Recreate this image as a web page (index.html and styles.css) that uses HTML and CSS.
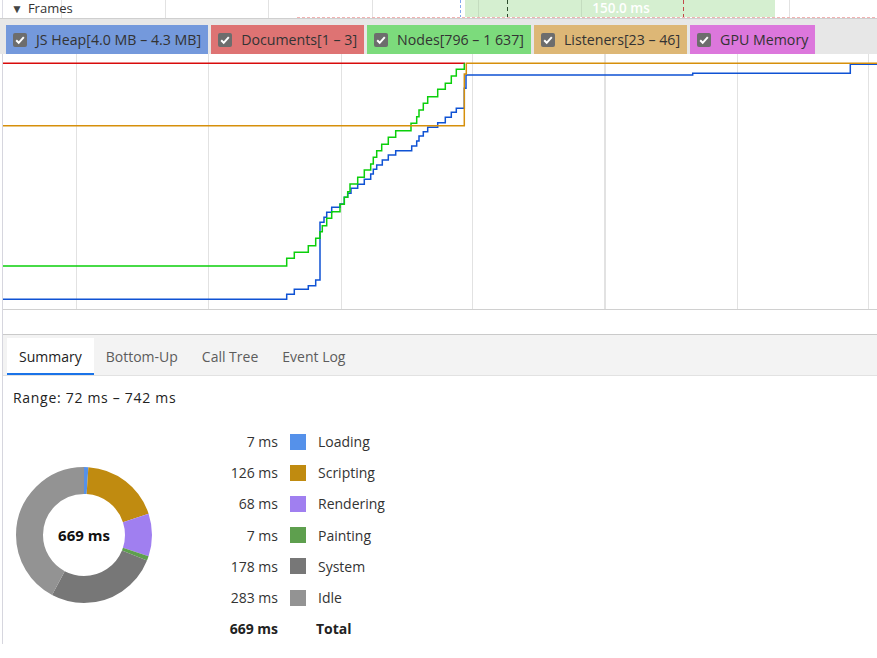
FILE: index.html
```html
<!DOCTYPE html>
<html lang="en">
<head>
<meta charset="utf-8">
<title>Performance – Memory</title>
<link rel="stylesheet" href="styles.css">
</head>
<body>
<div class="frames">
  <svg class="frames-canvas" width="877" height="18" viewBox="0 0 877 18">
    <line x1="2.5" y1="0" x2="2.5" y2="18" stroke="#dcdce4"/>
    <rect x="465" y="0" width="310" height="17" fill="#d5efd0"/>
    <g stroke="#e2e2e2">
      <line x1="61.5" y1="0" x2="61.5" y2="18"/>
      <line x1="165.5" y1="0" x2="165.5" y2="18"/>
      <line x1="268.5" y1="0" x2="268.5" y2="18"/>
      <line x1="372.5" y1="0" x2="372.5" y2="18"/>
      <line x1="789.5" y1="0" x2="789.5" y2="18"/>
    </g>
    <g stroke="#c4dcbf">
      <line x1="478.5" y1="0" x2="478.5" y2="17"/>
      <line x1="581.5" y1="0" x2="581.5" y2="17"/>
    </g>
    <line x1="460.5" y1="0" x2="460.5" y2="17" stroke="#7fa8ee" stroke-dasharray="3 2"/>
    <line x1="507.5" y1="0" x2="507.5" y2="17" stroke="#2c4a2c" stroke-dasharray="4 3"/>
    <line x1="683.5" y1="0" x2="683.5" y2="17" stroke="#c24a4a" stroke-dasharray="4 3"/>
    <text x="621" y="12.5" text-anchor="middle" class="frame-dur">150.0 ms</text>
    <line x1="297" y1="17.5" x2="877" y2="17.5" stroke="#f2b3b3" stroke-dasharray="3 2"/>
  </svg>
  <div class="frames-label"><span class="tri">▼</span><span>Frames</span></div>
</div>

<div class="legend">
  <label class="counter c-heap"><span class="cb"><svg width="14" height="14" viewBox="0 0 14 14"><path d="M3.2 7.3l2.5 2.5 5.1-5.6" fill="none" stroke="#fff" stroke-width="2"/></svg></span>JS Heap[4.0 MB – 4.3 MB]</label>
  <label class="counter c-docs"><span class="cb"><svg width="14" height="14" viewBox="0 0 14 14"><path d="M3.2 7.3l2.5 2.5 5.1-5.6" fill="none" stroke="#fff" stroke-width="2"/></svg></span>Documents[1 – 3]</label>
  <label class="counter c-nodes"><span class="cb"><svg width="14" height="14" viewBox="0 0 14 14"><path d="M3.2 7.3l2.5 2.5 5.1-5.6" fill="none" stroke="#fff" stroke-width="2"/></svg></span>Nodes[796 – 1 637]</label>
  <label class="counter c-listeners"><span class="cb"><svg width="14" height="14" viewBox="0 0 14 14"><path d="M3.2 7.3l2.5 2.5 5.1-5.6" fill="none" stroke="#fff" stroke-width="2"/></svg></span>Listeners[23 – 46]</label>
  <label class="counter c-gpu"><span class="cb"><svg width="14" height="14" viewBox="0 0 14 14"><path d="M3.2 7.3l2.5 2.5 5.1-5.6" fill="none" stroke="#fff" stroke-width="2"/></svg></span>GPU Memory</label>
</div>

<div class="panel">
  <div class="chart">
    <svg width="874" height="255" viewBox="3 54 874 255">
      <g stroke="#e2e2e2" stroke-width="1">
        <line x1="76.5" y1="54" x2="76.5" y2="309"/>
        <line x1="208.5" y1="54" x2="208.5" y2="309"/>
        <line x1="341.5" y1="54" x2="341.5" y2="309"/>
        <line x1="472.5" y1="54" x2="472.5" y2="309"/>
        <line x1="605" y1="54" x2="605" y2="309" stroke-width="2"/>
        <line x1="737.5" y1="54" x2="737.5" y2="309"/>
        <line x1="868.5" y1="54" x2="868.5" y2="309"/>
      </g>
      <g fill="none" stroke-width="1.5">
        <path class="l-heap" d="M3 299.3 H286.7 V294.3 H294.3 V289.3 H308.3 V285.7 H315.7 V280 H320 V222.3 H324 V217.3 H326.7 V212.3 H331.7 V207.3 H340 V204 H344.3 V197.3 H347.7 V193.3 H351 V188.3 H357.7 V184.3 H364.3 V179.3 H370.7 V174 H373.3 V169.3 H376.7 V165 H382.3 V160 H388.3 V155 H395.7 V150.7 H411.7 V146 H416.7 V141 H419 V136 H423.3 V131.7 H427.7 V127.3 H437.7 V122.7 H445.3 V117.3 H451.3 V112.3 H456.3 V108.3 H464.3 V88.3 H466 V75 H692.7 V73.3 H850.3 V64.3 H877"/>
        <path class="l-docs" d="M3 63.3 H465"/>
        <path class="l-nodes" d="M3 266 H286.7 V258.3 H294.3 V252.3 H308.3 V245.7 H315.7 V238.3 H320 V231.7 H322.3 V225.7 H326.7 V218.3 H331.7 V211.7 H340 V204.3 H344.3 V197.3 H347.7 V191.7 H350 V184 H357.7 V177.3 H364.3 V170 H370.7 V164 H373.3 V157.3 H376.7 V150.7 H381.7 V144.3 H388.3 V137.3 H395.7 V130.7 H411 V123.3 H416.7 V116.7 H419 V110 H423.3 V103.3 H427.7 V96.7 H437.7 V89.3 H445.3 V83.3 H451.3 V76 H456.3 V69.3 H464.3 V63.3"/>
        <path class="l-listeners" d="M3 125.7 H464.3 V74 H466.3 V63.3 H877"/>
      </g>
    </svg>
  </div>
  <div class="chart-gap"></div>
  <div class="tabs">
    <div class="tab active">Summary</div>
    <div class="tab">Bottom-Up</div>
    <div class="tab">Call Tree</div>
    <div class="tab">Event Log</div>
  </div>
  <div class="summary">
    <div class="range">Range: 72 ms – 742 ms</div>
    <div class="summary-body">
      <div class="donut">
        <svg width="136" height="136" viewBox="0 0 136 136">
          <g transform="rotate(-90 68 68)" fill="none" stroke-width="27">
            <circle cx="68" cy="68" r="54.5" stroke="#5591ea" stroke-dasharray="3.583 342.434" stroke-dashoffset="0"/>
            <circle cx="68" cy="68" r="54.5" stroke="#c08b10" stroke-dasharray="64.494 342.434" stroke-dashoffset="-3.583"/>
            <circle cx="68" cy="68" r="54.5" stroke="#a07ff0" stroke-dasharray="34.806 342.434" stroke-dashoffset="-68.077"/>
            <circle cx="68" cy="68" r="54.5" stroke="#5e9f4e" stroke-dasharray="3.583 342.434" stroke-dashoffset="-102.883"/>
            <circle cx="68" cy="68" r="54.5" stroke="#777777" stroke-dasharray="91.111 342.434" stroke-dashoffset="-106.466"/>
            <circle cx="68" cy="68" r="54.5" stroke="#939393" stroke-dasharray="144.856 342.434" stroke-dashoffset="-197.577"/>
          </g>
        </svg>
        <div class="donut-total">669 ms</div>
      </div>
      <div class="cats">
        <div class="val">7 ms</div><div class="sw sw-loading"></div><div class="name">Loading</div>
        <div class="val">126 ms</div><div class="sw sw-scripting"></div><div class="name">Scripting</div>
        <div class="val">68 ms</div><div class="sw sw-rendering"></div><div class="name">Rendering</div>
        <div class="val">7 ms</div><div class="sw sw-painting"></div><div class="name">Painting</div>
        <div class="val">178 ms</div><div class="sw sw-system"></div><div class="name">System</div>
        <div class="val">283 ms</div><div class="sw sw-idle"></div><div class="name">Idle</div>
        <div class="val total">669 ms</div><div></div><div class="name total total-name">Total</div>
      </div>
    </div>
  </div>
</div>
</body>
</html>
```
FILE: styles.css
```css
* { box-sizing: border-box; }

html, body {
  margin: 0;
  padding: 0;
  background: #fff;
}

body {
  width: 877px;
  height: 658px;
  overflow: hidden;
  font-family: "Open Sans", "Noto Sans", "Liberation Sans", sans-serif;
  color: #333;
}

/* Frames track */
.frames {
  position: relative;
  height: 19px;
  border-bottom: 1px solid #cfcfcf;
}

.frames-canvas {
  position: absolute;
  left: 0;
  top: 0;
  display: block;
}

.frame-dur {
  fill: #fff;
  font-family: "Open Sans", "Noto Sans", sans-serif;
  font-size: 13.5px;
  font-weight: 600;
}

.frames-label {
  position: relative;
  display: flex;
  align-items: center;
  gap: 5px;
  padding-left: 11px;
  padding-top: 1px;
  height: 16px;
  font-size: 13px;
  line-height: 15px;
  color: #333;
}

.frames-label .tri {
  font-size: 12px;
  color: #444;
}

/* Counter legend */
.legend {
  display: flex;
  align-items: flex-end;
  gap: 3px;
  height: 35px;
  padding-left: 6px;
  background: #e7e7e7;
}

.counter {
  display: flex;
  align-items: center;
  gap: 9px;
  height: 29px;
  padding: 0 7px;
  font-size: 14.2px;
  color: #333;
  white-space: nowrap;
}

.cb {
  width: 14px;
  height: 14px;
  border-radius: 2px;
  background: #6d6d6d;
  display: flex;
}

.c-heap { background: #7499dc; }
.c-docs { background: #de7373; }
.c-nodes { background: #7cdb7c; }
.c-listeners { background: #ddb776; }
.c-gpu { background: #dc77dc; }

/* Chart panel */
.panel {
  margin-left: 2px;
  border-left: 1px solid #d6d6de;
}

.chart {
  height: 256px;
  border-bottom: 1px solid #d0d0d0;
}

.chart svg { display: block; }

.l-heap { stroke: #0f52d4; }
.l-docs { stroke: #d80b0b; }
.l-nodes { stroke: #0bcf0b; }
.l-listeners { stroke: #d68f0b; }

.chart-gap {
  height: 25px;
  border-bottom: 1px solid #cacaca;
}

/* Tabs */
.tabs {
  display: flex;
  align-items: flex-end;
  height: 41px;
  padding-left: 4px;
  background: #f3f3f3;
  border-bottom: 1px solid #e2e2e2;
}

.tab {
  display: flex;
  align-items: center;
  height: 37px;
  padding: 0 12px;
  font-size: 14px;
  color: #5c5c5c;
}

.tab.active {
  background: #fff;
  color: #222;
  border-bottom: 2px solid #1a73e8;
  padding-top: 1px;
}

/* Summary */
.summary {
  padding: 12px 10px 0 10px;
}

.range {
  height: 20px;
  line-height: 20px;
  font-size: 14px;
  letter-spacing: 0.7px;
  color: #222;
}

.summary-body {
  display: flex;
  align-items: center;
  margin-top: 18px;
}

.donut {
  display: grid;
  margin-left: 3px;
  width: 136px;
  height: 136px;
}

.donut svg,
.donut-total {
  grid-area: 1 / 1;
}

.donut-total {
  align-self: center;
  justify-self: center;
  font-size: 15px;
  font-weight: 700;
  color: #111;
}

.cats {
  display: grid;
  grid-template-columns: 70px 16px auto;
  grid-auto-rows: 31.2px;
  column-gap: 12px;
  align-items: center;
  margin-left: 56px;
  font-size: 14px;
  color: #333;
}

.val { text-align: right; }

.total {
  font-weight: 700;
  color: #222;
}

.total-name { margin-left: -2px; }

.sw {
  width: 16px;
  height: 16px;
}

.sw-loading { background: #5591ea; }
.sw-scripting { background: #c08b10; }
.sw-rendering { background: #a07ff0; }
.sw-painting { background: #5e9f4e; }
.sw-system { background: #777777; }
.sw-idle { background: #939393; }
```
